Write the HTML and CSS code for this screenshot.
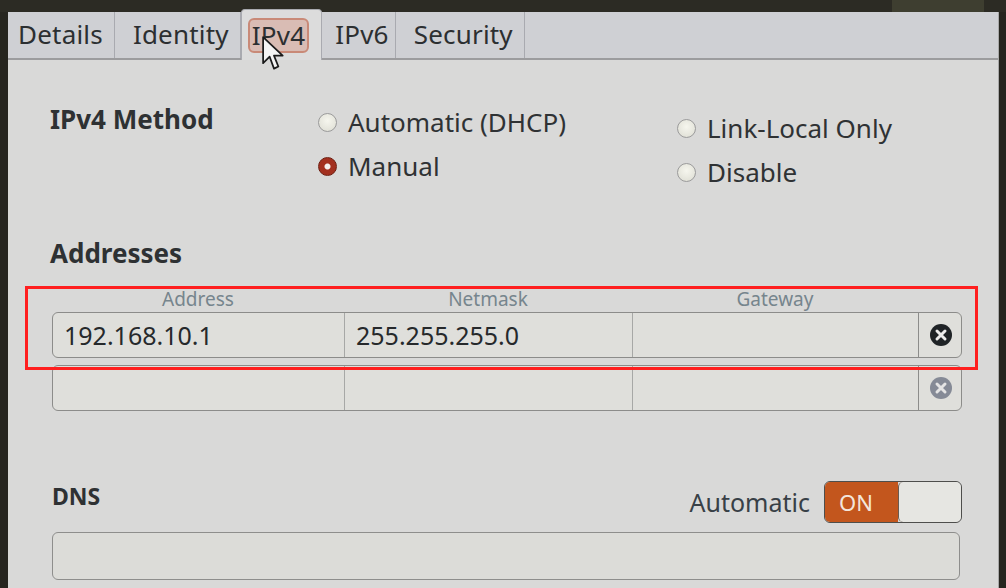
FILE: index.html
```html
<!DOCTYPE html>
<html>
<head>
<meta charset="utf-8">
<link rel="stylesheet" href="styles.css">
</head>
<body>
<div class="screen">
  <div class="topbar"><span class="top-btn"></span></div>
  <div class="window">
    <div class="tabs">
      <div class="tab">Details</div>
      <div class="tab">Identity</div>
      <div class="tab active"><span class="focus">IPv4</span></div>
      <div class="tab tab-v6">IPv6</div>
      <div class="tab">Security</div>
      <div class="tab-fill"></div>
    </div>
    <div class="content">
      <div class="method">
        <div class="h">IPv4 Method</div>
        <div class="radios">
          <div class="radio"><span class="dot"></span>Automatic (DHCP)</div>
          <div class="radio"><span class="dot on"></span>Manual</div>
        </div>
        <div class="radios r2">
          <div class="radio"><span class="dot"></span>Link-Local Only</div>
          <div class="radio"><span class="dot"></span>Disable</div>
        </div>
      </div>

      <div class="h addr-h">Addresses</div>
      <div class="addr">
        <div class="cols heads">
          <div>Address</div><div>Netmask</div><div>Gateway</div><div></div>
        </div>
        <div class="cols row">
          <div class="cell">192.168.10.1</div>
          <div class="cell">255.255.255.0</div>
          <div class="cell"></div>
          <div class="cell btn"><span class="xbtn"><svg viewBox="0 0 24 24" width="24" height="24"><circle cx="12" cy="12" r="11" fill="#1f2326"/><path d="M8 8 L16 16 M16 8 L8 16" stroke="#ececec" stroke-width="3" stroke-linecap="round"/></svg></span></div>
        </div>
        <div class="cols row">
          <div class="cell"></div>
          <div class="cell"></div>
          <div class="cell"></div>
          <div class="cell btn"><span class="xbtn"><svg viewBox="0 0 24 24" width="24" height="24"><circle cx="12" cy="12" r="11" fill="#858a96"/><path d="M8 8 L16 16 M16 8 L8 16" stroke="#e4e4e4" stroke-width="3" stroke-linecap="round"/></svg></span></div>
        </div>
        <div class="mark"></div>
      </div>

      <div class="dns">
        <div class="h small">DNS</div>
        <div class="auto">
          <span>Automatic</span>
          <span class="switch"><span class="on">ON</span><span class="knob"></span></span>
        </div>
      </div>
      <div class="dns-entry"></div>
    </div>
    <svg class="cursor" viewBox="0 0 22 34" width="24" height="37"><path d="M1 1 L1 25 L7 19 L11 30 L15 28 L11 18 L19 18 Z" fill="#f4f4f4" stroke="#1a1a1a" stroke-width="1.6" stroke-linejoin="round"/></svg>
  </div>
</div>
</body>
</html>
```

FILE: styles.css
```css
* { box-sizing: border-box; }
html, body { margin: 0; padding: 0; }
body {
  background: #26251f;
  font-family: "Noto Sans", "Open Sans", sans-serif;
  color: #2f3234;
}
.screen {
  width: 1006px;
  height: 588px;
  display: flex;
  flex-direction: column;
  overflow: hidden;
}
.topbar {
  height: 12px;
  flex: none;
  background: #2c2b24;
  display: flex;
  justify-content: flex-end;
  padding-right: 22px;
}
.top-btn {
  width: 92px;
  height: 12px;
  background: #3e3e30;
}
.window {
  flex: 1;
  margin-left: 8px;
  background: #d9d9d8;
  position: relative;
  border-right: 1px solid #a8a8a8;
  margin-right: 7px;
  display: flex;
  flex-direction: column;
}
.tabs {
  height: 48px;
  display: flex;
  align-items: stretch;
  background: #cfd0d4;
  border-bottom: 2px solid #9c9c9e;
}
.tab {
  display: flex;
  align-items: center;
  padding: 0 11px 2px 18px;
  font-size: 26px;
  border-right: 1px solid #a9aab0;
  color: #2c2f31;
  letter-spacing: 0.2px;
}
.tab:first-child { padding-left: 10px; }
.tab.tab-v6 { padding-left: 13px; padding-right: 6px; }
.tab.active {
  background: #dcdcdc;
  border: 1px solid #a9aab0;
  border-bottom: none;
  border-radius: 4px 4px 0 0;
  margin-top: -3px;
  margin-bottom: -2px;
  padding: 0 12px 0 6px;
}
.focus {
  border: 2px solid #c98a78;
  background: #d9bcb4;
  border-radius: 6px;
  padding: 0 2px;
  line-height: 31px;
}
.tab-fill { flex: 1; }
.content {
  padding: 0 0 0 42px;
  flex: 1;
  display: flex;
  flex-direction: column;
}
.h {
  font-weight: 700;
  font-size: 26px;
  color: #2e3133;
}
.h.small { font-size: 23px; }
.method {
  display: grid;
  grid-template-columns: 268px 359px 1fr;
  margin-top: 42px;
}
.method .h { line-height: 34px; }
.radios {
  display: flex;
  flex-direction: column;
  gap: 10px;
  margin-top: 3px;
}
.radios.r2 { margin-top: 9px; }
.radio {
  display: flex;
  align-items: center;
  font-size: 26px;
  line-height: 34px;
  gap: 11px;
  color: #2f3234;
}
.dot {
  width: 19px;
  height: 19px;
  border-radius: 50%;
  border: 1px solid #9b9b9b;
  background: radial-gradient(circle at 50% 40%, #f6f6ee, #dcdcd2);
  flex: none;
}
.dot.on {
  border-color: #6e1e10;
  background: radial-gradient(circle, #f4f0ee 0 2.5px, #a3301f 3.5px);
}
.addr-h {
  margin-top: 47px;
  line-height: 34px;
}
.addr {
  position: relative;
  margin-top: 18px;
  width: 910px;
  margin-left: 2px;
}
.cols {
  display: grid;
  grid-template-columns: 292px 288px 286px 44px;
}
.heads {
  font-size: 19px;
  color: #76858d;
  text-align: center;
  height: 24px;
  line-height: 22px;
}
.row {
  height: 46px;
  border: 1px solid #8c8c8a;
  border-radius: 6px;
  background: #dfdfdb;
  margin-bottom: 7px;
}
.cell {
  border-right: 1px solid #a7a8a6;
  font-size: 25px;
  display: flex;
  align-items: center;
  padding-left: 11px;
  color: #26292b;
}
.cell.btn {
  border-right: none;
  justify-content: center;
  padding-left: 0;
}
.cell:nth-child(3) { border-right-color: #8c8c8a; }
.xbtn { display: flex; }
.mark {
  position: absolute;
  left: -27px;
  top: -2px;
  width: 953px;
  height: 84px;
  border: 3px solid #ff1f1f;
}
.dns {
  margin-top: 62px;
  display: flex;
  align-items: center;
  justify-content: space-between;
  width: 910px;
  margin-left: 2px;
}
.dns .h { margin-bottom: 12px; }
.auto {
  display: flex;
  align-items: center;
  gap: 14px;
  font-size: 25px;
  color: #384046;
}
.switch {
  display: flex;
  width: 138px;
  height: 42px;
  border: 1px solid #4e4e4c;
  border-radius: 6px;
  overflow: hidden;
}
.switch .on {
  width: 73px;
  background: #c3561d;
  color: #f3e6dc;
  font-size: 22px;
  display: flex;
  align-items: center;
  padding-left: 14px;
}
.switch .knob {
  flex: 1;
  background: #e6e6e2;
  border-left: 1px solid #6a5a50;
  border-radius: 5px;
}
.dns-entry {
  margin-top: 8px;
  width: 908px;
  margin-left: 2px;
  height: 48px;
  border: 1px solid #8e8e8c;
  border-radius: 6px;
  background: #dcdcd8;
}
.cursor {
  position: absolute;
  left: 254px;
  top: 24px;
}
```
